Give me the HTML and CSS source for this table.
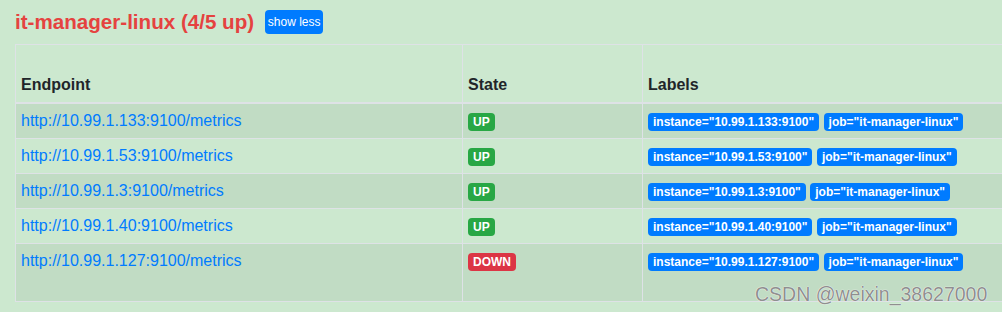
FILE: index.html
```html
<!DOCTYPE html>
<html lang="en">

<head>
    <meta charset="UTF-8">
    <meta name="viewport" content="width=device-width, initial-scale=1.0">
    <link rel="stylesheet" href="styles.css">
    <title>Targets</title>
</head>

<body>
    <div class="pool">

        <div class="pool-head">
            <h2 class="pool-title">it-manager-linux (4/5 up)</h2>
            <button class="btn-toggle" type="button">show less</button>
        </div>

        <table class="targets">
            <thead>
                <tr>
                    <th class="col-endpoint">Endpoint</th>
                    <th class="col-state">State</th>
                    <th class="col-labels">Labels</th>
                </tr>
            </thead>
            <tbody>
                <tr>
                    <td><a href="#">http://10.99.1.133:9100/metrics</a></td>
                    <td><span class="badge badge-up">UP</span></td>
                    <td>
                        <span class="badge badge-label">instance="10.99.1.133:9100"</span>
                        <span class="badge badge-label">job="it-manager-linux"</span>
                    </td>
                </tr>
                <tr>
                    <td><a href="#">http://10.99.1.53:9100/metrics</a></td>
                    <td><span class="badge badge-up">UP</span></td>
                    <td>
                        <span class="badge badge-label">instance="10.99.1.53:9100"</span>
                        <span class="badge badge-label">job="it-manager-linux"</span>
                    </td>
                </tr>
                <tr>
                    <td><a href="#">http://10.99.1.3:9100/metrics</a></td>
                    <td><span class="badge badge-up">UP</span></td>
                    <td>
                        <span class="badge badge-label">instance="10.99.1.3:9100"</span>
                        <span class="badge badge-label">job="it-manager-linux"</span>
                    </td>
                </tr>
                <tr>
                    <td><a href="#">http://10.99.1.40:9100/metrics</a></td>
                    <td><span class="badge badge-up">UP</span></td>
                    <td>
                        <span class="badge badge-label">instance="10.99.1.40:9100"</span>
                        <span class="badge badge-label">job="it-manager-linux"</span>
                    </td>
                </tr>
                <tr class="row-tall">
                    <td><a href="#">http://10.99.1.127:9100/metrics</a></td>
                    <td><span class="badge badge-down">DOWN</span></td>
                    <td>
                        <span class="badge badge-label">instance="10.99.1.127:9100"</span>
                        <span class="badge badge-label">job="it-manager-linux"</span>
                    </td>
                </tr>
            </tbody>
        </table>

    </div>

    <div class="watermark">CSDN @weixin_38627000</div>
</body>

</html>
```

FILE: styles.css
```css
html {
    box-sizing: border-box;
}

*,
*::before,
*::after {
    margin: 0;
    padding: 0;
    box-sizing: inherit;
}

body {
    background-color: #cce8cf;
    color: #212529;
    font-family: "Liberation Sans", Arial, sans-serif;
    font-size: 16px;
    line-height: 1.5;
    overflow: hidden;
}

.pool {
    padding: 10px 0 0 15px;
}

.pool-head {
    display: flex;
    align-items: center;
    gap: 11px;
    height: 24px;
    margin-bottom: 10px;
}

.pool-title {
    color: #e5423f;
    font-size: 20.6px;
    font-weight: bold;
    line-height: 1.2;
}

.btn-toggle {
    background-color: #007bff;
    color: white;
    border: none;
    border-radius: 4px;
    font-family: inherit;
    font-size: 12px;
    line-height: 1.5;
    padding: 0;
    width: 58px;
    height: 24px;
    white-space: nowrap;
}

.targets {
    width: 1100px;
    border-collapse: collapse;
    border: 1px solid #dee2e6;
}

.targets th,
.targets td {
    padding: 5px 5px;
    text-align: left;
    vertical-align: top;
    border: 1px solid #dee2e6;
}

.targets th {
    vertical-align: bottom;
    height: 58px;
    border-bottom: 2px solid #dee2e6;
}

.col-endpoint {
    width: 447px;
}

.col-state {
    width: 180px;
}

.targets tbody tr:nth-child(odd) {
    background-color: rgba(0, 0, 0, 0.05);
}

.targets .row-tall td {
    height: 58px;
}

.targets a {
    color: #007bff;
    text-decoration: none;
}

.badge {
    display: inline-block;
    padding: 2px 5px;
    font-size: 12px;
    font-weight: bold;
    line-height: 14px;
    color: white;
    border-radius: 4px;
    white-space: nowrap;
    vertical-align: 0;
}

.badge-up {
    background-color: #28a745;
}

.badge-down {
    background-color: #dc3545;
}

.badge-label {
    background-color: #007bff;
}

.watermark {
    position: absolute;
    left: 755px;
    top: 280px;
    font-size: 19.5px;
    color: #8f8f8f;
    text-shadow: 0 0 1px #fff, 0 0 1px #fff;
}
```
